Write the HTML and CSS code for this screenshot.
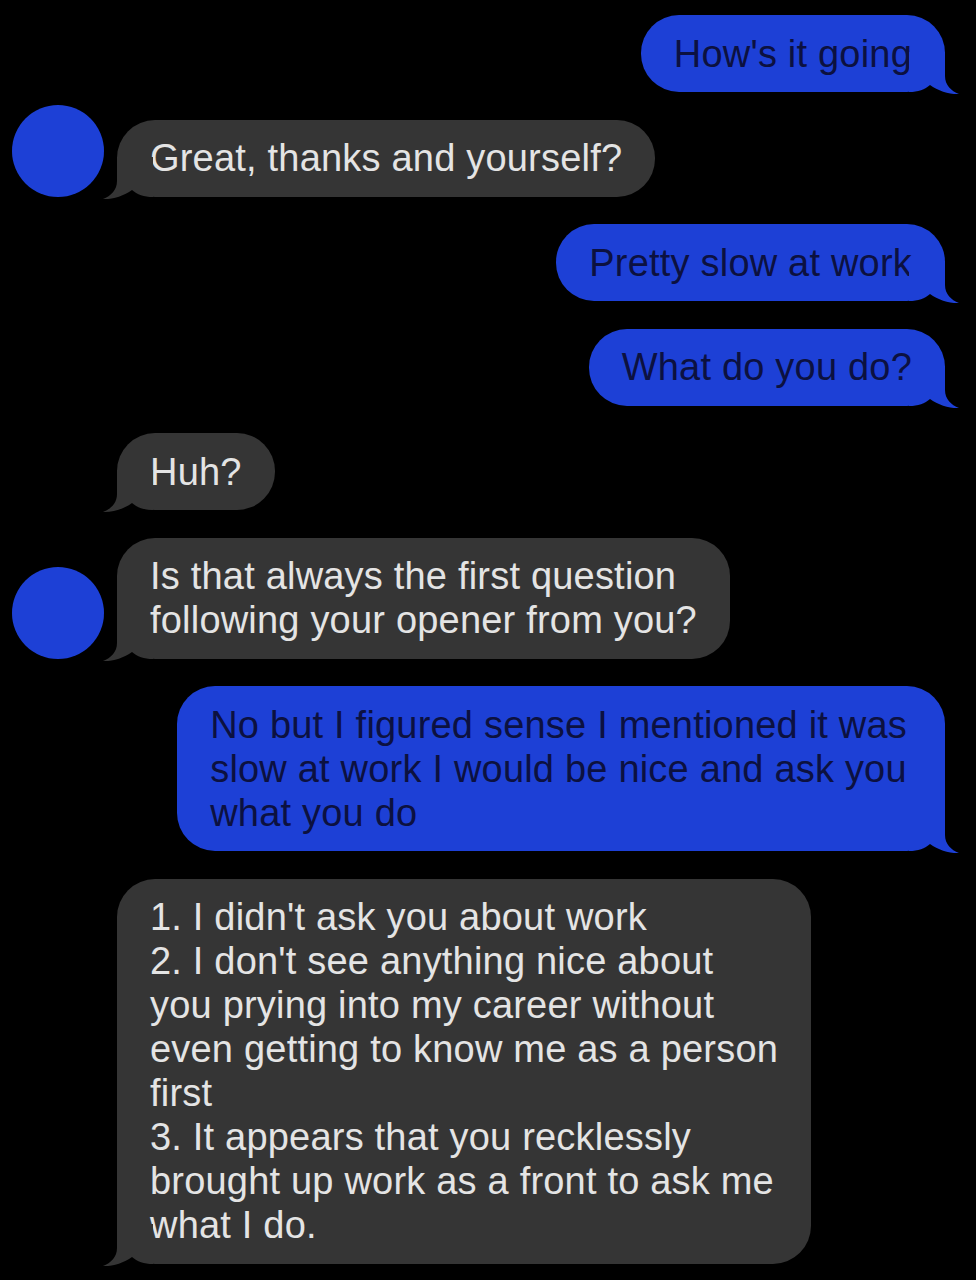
FILE: index.html
```html
<!DOCTYPE html>
<html lang="en">
<head>
<meta charset="utf-8">
<title>Messages</title>
<link rel="stylesheet" href="styles.css">
</head>
<body>
<div class="chat">
  <div class="row sent">
    <div class="bubble">How's it going<svg class="tail" viewBox="0 0 50 42"><path d="M0 0 H36 V24 C36 33 42 39 50 42 C41 42.5 29 39 21 33 C16 37.5 9 40 0 40 Z"/></svg></div>
  </div>
  <div class="row recv">
    <div class="avatar"></div>
    <div class="bubble">Great, thanks and yourself?<svg class="tail" viewBox="0 0 50 42"><path d="M0 0 H36 V24 C36 33 42 39 50 42 C41 42.5 29 39 21 33 C16 37.5 9 40 0 40 Z"/></svg></div>
  </div>
  <div class="row sent">
    <div class="bubble">Pretty slow at work<svg class="tail" viewBox="0 0 50 42"><path d="M0 0 H36 V24 C36 33 42 39 50 42 C41 42.5 29 39 21 33 C16 37.5 9 40 0 40 Z"/></svg></div>
  </div>
  <div class="row sent">
    <div class="bubble">What do you do?<svg class="tail" viewBox="0 0 50 42"><path d="M0 0 H36 V24 C36 33 42 39 50 42 C41 42.5 29 39 21 33 C16 37.5 9 40 0 40 Z"/></svg></div>
  </div>
  <div class="row recv">
    <div class="avatar-slot"></div>
    <div class="bubble">Huh?<svg class="tail" viewBox="0 0 50 42"><path d="M0 0 H36 V24 C36 33 42 39 50 42 C41 42.5 29 39 21 33 C16 37.5 9 40 0 40 Z"/></svg></div>
  </div>
  <div class="row recv">
    <div class="avatar"></div>
    <div class="bubble">Is that always the first question<br>following your opener from you?<svg class="tail" viewBox="0 0 50 42"><path d="M0 0 H36 V24 C36 33 42 39 50 42 C41 42.5 29 39 21 33 C16 37.5 9 40 0 40 Z"/></svg></div>
  </div>
  <div class="row sent">
    <div class="bubble wide">No but I figured sense I mentioned it was<br>slow at work I would be nice and ask you<br>what you do<svg class="tail" viewBox="0 0 50 42"><path d="M0 0 H36 V24 C36 33 42 39 50 42 C41 42.5 29 39 21 33 C16 37.5 9 40 0 40 Z"/></svg></div>
  </div>
  <div class="row recv">
    <div class="avatar-slot"></div>
    <div class="bubble">1. I didn't ask you about work<br>2. I don't see anything nice about<br>you prying into my career without<br>even getting to know me as a person<br>first<br>3. It appears that you recklessly<br>brought up work as a front to ask me<br>what I do.<svg class="tail" viewBox="0 0 50 42"><path d="M0 0 H36 V24 C36 33 42 39 50 42 C41 42.5 29 39 21 33 C16 37.5 9 40 0 40 Z"/></svg></div>
  </div>
</div>
</body>
</html>
```

FILE: styles.css
```css
html, body {
  margin: 0;
  background: #000;
}

.chat {
  display: flex;
  flex-direction: column;
  gap: 27.5px;
  padding: 15px 31px 20px 12px;
  font-family: "Liberation Sans", Arial, sans-serif;
  font-size: 38px;
  line-height: 44px;
  letter-spacing: 0.2px;
}

.row {
  display: flex;
  align-items: flex-end;
}

.row.sent {
  justify-content: flex-end;
}

.avatar {
  flex: none;
  width: 92px;
  height: 92px;
  margin-top: -15px;
  border-radius: 50%;
  background: #1d40d6;
}

.avatar-slot {
  flex: none;
  width: 92px;
}

.bubble {
  position: relative;
  padding: 16.5px 33px;
  border-radius: 38px;
  white-space: nowrap;
}

.wide {
  padding-right: 38px;
}

.sent .bubble {
  background: #1d40d6;
  color: #0c1140;
}

.recv .bubble {
  margin-left: 13px;
  background: #353535;
  color: #e4e4e4;
}

.tail {
  position: absolute;
  bottom: -2px;
  width: 50px;
  height: 42px;
  overflow: visible;
}

.sent .tail {
  right: -14px;
}

.sent .tail path {
  fill: #1d40d6;
}

.recv .tail {
  left: -14px;
  transform: scaleX(-1);
}

.recv .tail path {
  fill: #353535;
}
```
